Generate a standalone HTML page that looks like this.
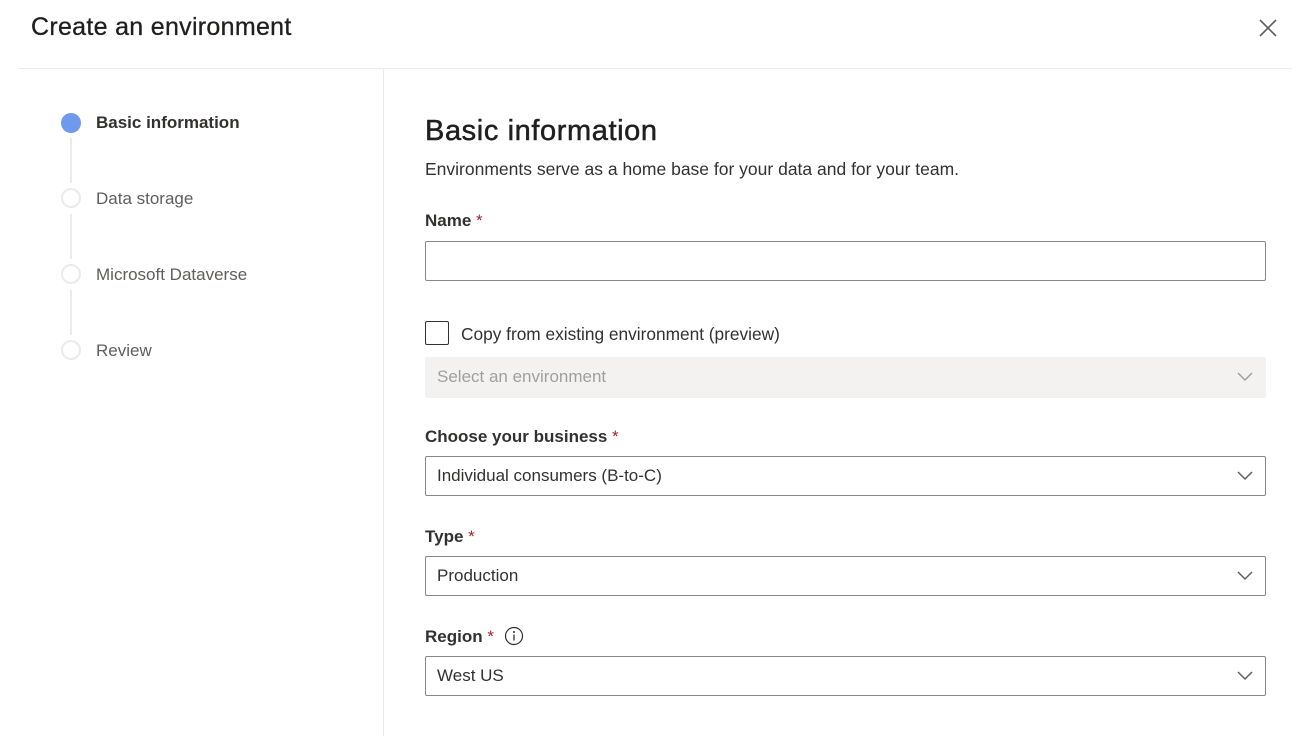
<!DOCTYPE html>
<html><head><style>
body{margin:0;width:1303px;height:736px;background:#fff;font-family:"Liberation Sans",sans-serif;color:#323130;position:relative;overflow:hidden}
.a{position:absolute}
.lbl{font-size:17px;font-weight:bold;color:#323130}
.req{color:#a4262c;font-weight:normal}
.box{position:absolute;left:425px;width:839px;height:38px;border:1px solid #8a8886;border-radius:2px;font-size:17px;line-height:38px;box-sizing:content-box}
.box span{margin-left:11px}
.chev{position:absolute;right:12px;top:14px}
.step{position:absolute;left:96px;font-size:17px;color:#605e5c}
.circ{position:absolute;left:61px;width:16px;height:16px;border:2px solid #edebe9;border-radius:50%}
.vl{position:absolute;left:70px;width:2px;background:#edebe9}
</style></head><body>
<div class="a" style="left:31px;top:13px;font-size:25px;color:#201f1e;letter-spacing:0.3px;-webkit-text-stroke:0.3px #201f1e">Create an environment</div>
<svg class="a" style="left:1259px;top:19px" width="18" height="18"><path d="M1 1L17 17M17 1L1 17" stroke="#605e5c" stroke-width="1.6"/></svg>
<div class="a" style="left:18px;top:68px;width:1274px;height:1px;background:#edebe9"></div>
<div class="a" style="left:383px;top:69px;width:1px;height:667px;background:#edebe9"></div>
<div class="a" style="left:61px;top:113px;width:20px;height:20px;border-radius:50%;background:#6f99ec"></div>
<div class="step" style="top:113px;color:#323130;font-weight:bold">Basic information</div>
<div class="vl" style="top:138px;height:45px"></div>
<div class="circ" style="top:188px"></div><div class="step" style="top:189px">Data storage</div>
<div class="vl" style="top:214px;height:45px"></div>
<div class="circ" style="top:264px"></div><div class="step" style="top:265px">Microsoft Dataverse</div>
<div class="vl" style="top:290px;height:45px"></div>
<div class="circ" style="top:340px"></div><div class="step" style="top:341px">Review</div>

<div class="a" style="left:425px;top:115px;font-size:29px;color:#201f1e;letter-spacing:0.6px;-webkit-text-stroke:0.5px #201f1e">Basic information</div>
<div class="a" style="left:425px;top:159px;font-size:17.5px;color:#323130">Environments serve as a home base for your data and for your team.</div>
<div class="a lbl" style="left:425px;top:211px">Name <span class="req">*</span></div>
<div class="box" style="top:241px"></div>
<div class="a" style="left:425px;top:321px;width:22px;height:22px;border:1px solid #323130;border-radius:2px"></div>
<div class="a" style="left:461px;top:324px;font-size:17.3px">Copy from existing environment (preview)</div>
<div class="box" style="top:357px;border-color:#f3f2f1;background:#f3f2f1;color:#a19f9d;height:39px"><span>Select an environment</span><svg class="chev" width="16" height="10"><path d="M1 1L8 8L15 1" stroke="#a19f9d" stroke-width="1.5" fill="none"/></svg></div>
<div class="a lbl" style="left:425px;top:427px">Choose your business <span class="req">*</span></div>
<div class="box" style="top:456px"><span>Individual consumers (B-to-C)</span><svg class="chev" width="16" height="10"><path d="M1 1L8 8L15 1" stroke="#605e5c" stroke-width="1.5" fill="none"/></svg></div>
<div class="a lbl" style="left:425px;top:527px">Type <span class="req">*</span></div>
<div class="box" style="top:556px"><span>Production</span><svg class="chev" width="16" height="10"><path d="M1 1L8 8L15 1" stroke="#605e5c" stroke-width="1.5" fill="none"/></svg></div>
<div class="a lbl" style="left:425px;top:627px">Region <span class="req">*</span></div>
<svg class="a" style="left:504px;top:626px" width="20" height="20"><circle cx="10" cy="10" r="8.5" stroke="#323130" stroke-width="1.2" fill="none"/><path d="M10 8.5V14.5" stroke="#323130" stroke-width="1.3"/><circle cx="10" cy="6" r="1" fill="#323130"/></svg>
<div class="box" style="top:656px"><span>West US</span><svg class="chev" width="16" height="10"><path d="M1 1L8 8L15 1" stroke="#605e5c" stroke-width="1.5" fill="none"/></svg></div>
</body></html>
